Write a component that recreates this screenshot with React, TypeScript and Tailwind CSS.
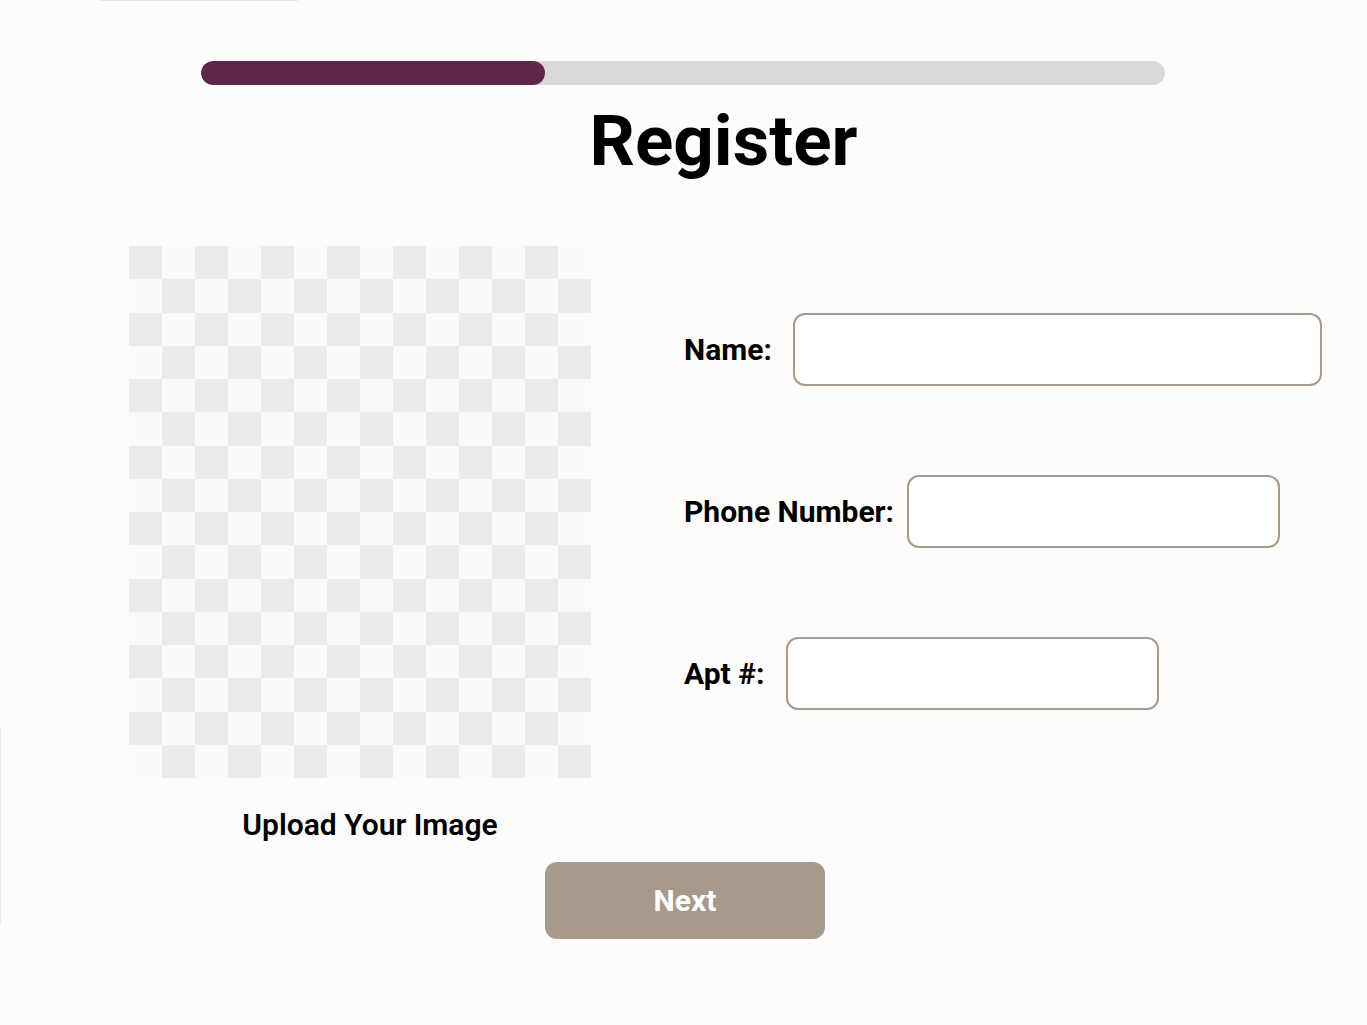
import { useState } from "react";

const COLS = 14;
const ROWS = 16;

function Checker() {
  const cells = [];
  for (let r = 0; r < ROWS; r++) {
    for (let c = 0; c < COLS; c++) {
      cells.push(
        <div
          key={`${r}-${c}`}
          className={(r + c) % 2 === 0 ? "bg-[#ebebeb]" : "bg-[#f9fafb]"}
        />
      );
    }
  }
  return (
    <div className="grid w-[462px] h-[532px] grid-cols-[repeat(14,33px)] grid-rows-[repeat(16,33.25px)]">
      {cells}
    </div>
  );
}

function Field({ label, width, gap }: { label: string; width: string; gap: string }) {
  const [value, setValue] = useState("");
  return (
    <div className="flex items-center h-[73px]">
      <label className={`text-[30px] font-bold text-black ${gap}`}>{label}</label>
      <input
        value={value}
        onChange={(e) => setValue(e.target.value)}
        className={`${width} h-[73px] rounded-xl border-2 border-[#a89a8a] bg-white outline-none px-4 text-2xl`}
      />
    </div>
  );
}

export default function App() {
  return (
    <div className="relative min-h-screen bg-[#fdfcfa] font-['Roboto',sans-serif] text-black">
      {/* stray rules left over from the canvas */}
      <div className="absolute left-[100px] top-0 w-[198px] h-px bg-[#e6e6e6]" />
      <div className="absolute left-0 top-[727px] w-px h-[196px] bg-[#e8e8e8]" />

      {/* progress */}
      <div className="pt-[61px] pl-[201px]">
        <div className="w-[964px] h-6 rounded-full bg-[#d9d9d9] overflow-hidden">
          <div className="w-[344px] h-full rounded-full bg-[#5e2749]" />
        </div>
      </div>

      <h1 className="mt-[16px] pl-[80px] text-center text-[71px] leading-[80px] font-bold">
        Register
      </h1>

      <div className="flex mt-[65px]">
        <div className="flex flex-col items-center pl-[129px]">
          <Checker />
          <p className="mt-[29px] pl-[20px] text-[30px] leading-[36px] font-semibold">
            Upload Your Image
          </p>
        </div>

        <div className="flex flex-col gap-[89px] pl-[93px] pt-[67px]">
          <Field label="Name:" width="w-[529px]" gap="mr-[21px]" />
          <Field label="Phone Number:" width="w-[373px]" gap="mr-[13px]" />
          <Field label="Apt #:" width="w-[373px]" gap="mr-[22px]" />
        </div>
      </div>

      <div className="flex pl-[545px] mt-[19px]">
        <button className="w-[280px] h-[77px] rounded-xl bg-[#a89a8a] text-white text-[30px] font-bold">
          Next
        </button>
      </div>
    </div>
  );
}
